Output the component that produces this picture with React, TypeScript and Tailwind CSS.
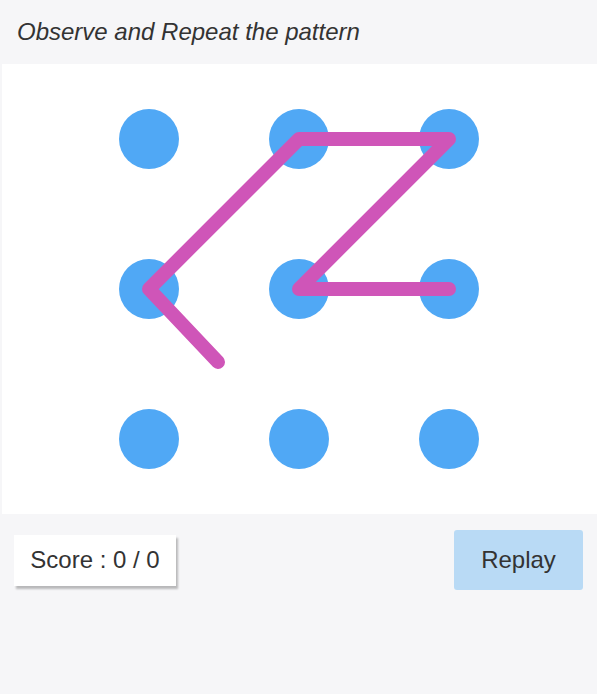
const dots = [
  [147, 75], [297, 75], [447, 75],
  [147, 225], [297, 225], [447, 225],
  [147, 375], [297, 375], [447, 375],
];

// pattern drawn across the dots, last segment still following the pointer
const trail = "447,225 297,225 447,75 297,75 147,225 216,298";

export default function App() {
  return (
    <div
      className="min-h-[694px] bg-[#f6f6f8] text-[#333333]"
      style={{ fontFamily: '"Liberation Sans", Arial, sans-serif' }}
    >
      <div className="flex h-[64px] items-center px-[17px]">
        <h1 className="text-[24px] italic">Observe and Repeat the pattern</h1>
      </div>

      <div className="ml-[2px] h-[450px] bg-white">
        <svg width="595" height="450" viewBox="0 0 595 450">
          {dots.map(([cx, cy], i) => (
            <circle key={i} cx={cx} cy={cy} r="30" fill="#50a8f5" />
          ))}
          <polyline
            points={trail}
            fill="none"
            stroke="#cf55b8"
            strokeWidth="14"
            strokeLinecap="round"
            strokeLinejoin="round"
          />
        </svg>
      </div>

      <div className="mt-[16px] flex items-center justify-between px-[14px]">
        <div className="flex h-[51px] w-[162px] items-center justify-center bg-white text-[24px] shadow-[2px_3px_2px_rgba(0,0,0,0.25)]">
          Score : 0 / 0
        </div>
        <button className="h-[60px] w-[129px] rounded-[3px] bg-[#b9daf5] text-[24px] text-[#333333]">
          Replay
        </button>
      </div>
    </div>
  );
}
